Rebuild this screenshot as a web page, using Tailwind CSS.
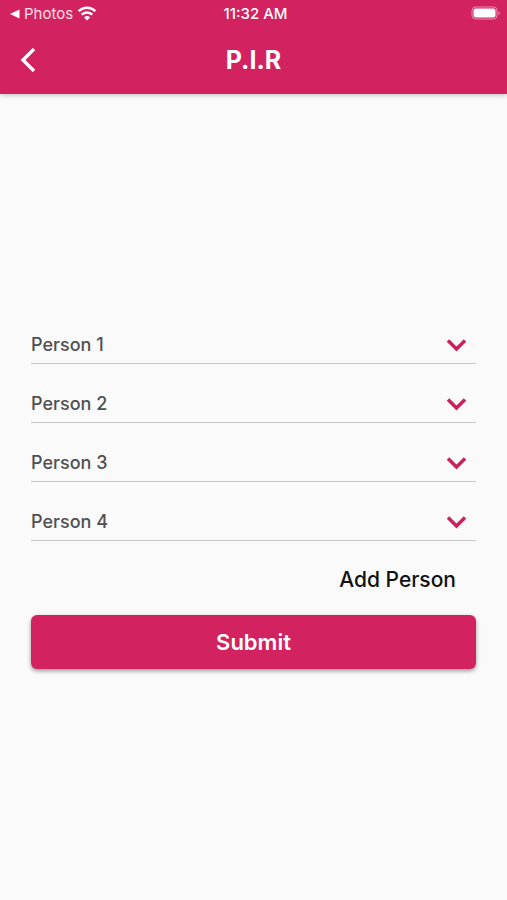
<!DOCTYPE html>
<html lang="en">
<head>
<meta charset="utf-8">
<meta name="viewport" content="width=device-width, initial-scale=1">
<title>P.I.R</title>
<script src="https://cdn.jsdelivr.net/npm/@tailwindcss/browser@4"></script>
</head>
<body class="flex min-h-screen flex-col bg-[#fafafa] font-['Inter','Liberation_Sans',sans-serif]">
<header class="relative z-10 bg-[#d32260] text-white shadow-[0_1px_5px_rgba(0,0,0,0.25)]">
  <div class="grid h-7 grid-cols-3 items-center pr-1.5 pl-2.5 text-[15px] leading-5">
    <div class="flex items-center">
      <a href="#" class="flex items-center gap-1 text-white/85">
        <svg class="h-3 w-2.5" viewBox="0 0 10 12" fill="#fff" aria-hidden="true"><path d="M0 6 9.500 1.500v9z"/></svg>
        <span>Photos</span>
      </a>
      <svg class="ml-1 h-4 w-5" viewBox="0 0 20 16" fill="none" stroke="#fff" stroke-width="2.5" aria-label="Wi-Fi">
        <path d="M1.600 5.200a12 12 0 0 1 16.800 0"/><path d="M4.700 8.700a7.600 7.600 0 0 1 10.600 0"/>
        <path d="M10 14.500 7 11.500a4.300 4.300 0 0 1 6 0z" fill="#fff" stroke="none"/>
      </svg>
    </div>
    <time class="text-center font-medium">11:32 AM</time>
    <svg class="h-4 w-[30px] justify-self-end" viewBox="0 0 30 16" aria-label="Battery">
      <rect x="1" y="1" width="25" height="12" rx="3.5" fill="none" stroke="#fff" stroke-opacity=".5"/>
      <rect x="2.500" y="2.500" width="22" height="9" rx="2" fill="#fff"/>
      <path d="M27.500 5a2.300 2.300 0 0 1 0 4z" fill="#fff" fill-opacity=".55"/>
    </svg>
  </div>
  <div class="grid h-[66px] grid-cols-[56px_1fr_56px] items-start">
    <button type="button" aria-label="Back" class="flex h-16 items-center pl-5">
      <svg class="h-6 w-4" viewBox="0 0 16 24" fill="none" stroke="#fff" stroke-width="3.4" aria-hidden="true"><path d="M14 1 3 12l11 11"/></svg>
    </button>
    <h1 class="text-center text-[25px] leading-[64px] font-bold">P.I.R</h1>
  </div>
</header>
<main class="flex flex-1 flex-col justify-center px-[31px]">
  <form>
    <div class="flex flex-col gap-5">
      <div class="relative">
        <select aria-label="Person 1" class="block h-[39px] w-full appearance-none border-b border-[#c8c8c8] bg-transparent text-[18px] font-medium text-[#505050]"><option>Person 1</option></select>
        <svg class="pointer-events-none absolute top-3 right-2 h-4 w-6" viewBox="0 0 24 16" fill="none" stroke="#c8215c" stroke-width="3.500" aria-hidden="true"><path d="m4 3.500 8.500 8.500L21 3.500"/></svg>
      </div>
      <div class="relative">
        <select aria-label="Person 2" class="block h-[39px] w-full appearance-none border-b border-[#c8c8c8] bg-transparent text-[18px] font-medium text-[#505050]"><option>Person 2</option></select>
        <svg class="pointer-events-none absolute top-3 right-2 h-4 w-6" viewBox="0 0 24 16" fill="none" stroke="#c8215c" stroke-width="3.500" aria-hidden="true"><path d="m4 3.500 8.500 8.500L21 3.500"/></svg>
      </div>
      <div class="relative">
        <select aria-label="Person 3" class="block h-[39px] w-full appearance-none border-b border-[#c8c8c8] bg-transparent text-[18px] font-medium text-[#505050]"><option>Person 3</option></select>
        <svg class="pointer-events-none absolute top-3 right-2 h-4 w-6" viewBox="0 0 24 16" fill="none" stroke="#c8215c" stroke-width="3.500" aria-hidden="true"><path d="m4 3.500 8.500 8.500L21 3.500"/></svg>
      </div>
      <div class="relative">
        <select aria-label="Person 4" class="block h-[39px] w-full appearance-none border-b border-[#c8c8c8] bg-transparent text-[18px] font-medium text-[#505050]"><option>Person 4</option></select>
        <svg class="pointer-events-none absolute top-3 right-2 h-4 w-6" viewBox="0 0 24 16" fill="none" stroke="#c8215c" stroke-width="3.500" aria-hidden="true"><path d="m4 3.500 8.500 8.500L21 3.500"/></svg>
      </div>
    </div>
    <div class="flex justify-end pr-5">
      <button type="button" class="h-[74px] pt-1 text-[21px] font-medium text-[#111]">Add Person</button>
    </div>
    <button type="submit" class="block h-[54px] w-full rounded-md bg-[#d32260] text-[22px] font-semibold text-white shadow-[0_2px_4px_rgba(0,0,0,0.4)]">Submit</button>
  </form>
</main>
</body>
</html>
